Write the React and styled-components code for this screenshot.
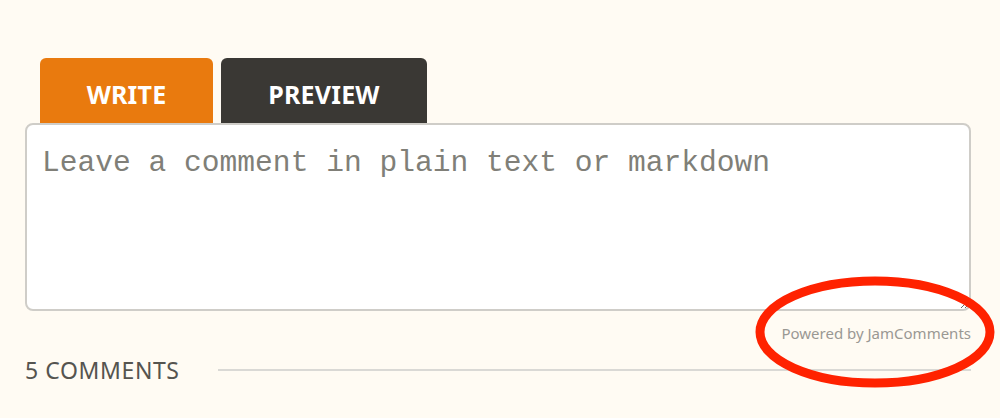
import styled, { createGlobalStyle } from "styled-components";

const GlobalStyle = createGlobalStyle`
  body {
    margin: 0;
    background: #fffbf3;
    font-family: "Noto Sans", "Open Sans", sans-serif;
  }
`;

const Page = styled.div`
  position: relative;
  width: 1000px;
  height: 418px;
  padding: 58px 29px 0 25px;
  box-sizing: border-box;
`;

const Tabs = styled.div`
  display: flex;
  gap: 8px;
  padding-left: 15px;
`;

const Tab = styled.button`
  height: 65px;
  width: ${(p) => p.$width}px;
  padding: 7px 0 0;
  border: none;
  border-radius: 6px 6px 0 0;
  background: ${(p) => (p.$active ? "#e97a0e" : "#3a3834")};
  color: #ffffff;
  font-family: "Noto Sans", sans-serif;
  font-weight: 700;
  font-size: 25px;
  letter-spacing: 0.2px;
  cursor: pointer;
`;

const Editor = styled.textarea`
  display: block;
  width: 100%;
  height: 188px;
  box-sizing: border-box;
  margin: 0;
  padding: 16px 15px;
  border: 2px solid #cfcdc8;
  border-radius: 8px;
  background: #ffffff;
  font-family: "Liberation Mono", monospace;
  font-size: 29.6px;
  line-height: 44px;
  color: #333;
  outline: none;

  &::placeholder {
    color: #807f78;
  }
`;

const Powered = styled.div`
  display: flex;
  justify-content: flex-end;
  margin-top: 12px;
  font-size: 15px;
  color: #9a9893;
`;

const CountRow = styled.div`
  display: flex;
  align-items: center;
  gap: 38px;
  margin-top: 11px;
`;

const Count = styled.h3`
  margin: 0;
  font-weight: 400;
  font-size: 23px;
  color: #55544f;
  letter-spacing: 0.6px;
`;

const Rule = styled.div`
  flex: 1;
  height: 2px;
  background: #dad9d5;
`;

const Highlight = styled.svg`
  position: absolute;
  left: 750px;
  top: 274px;
  pointer-events: none;
`;

const App = () => {
  return (
    <>
      <GlobalStyle />
      <Page>
        <Tabs>
          <Tab $active $width={173}>WRITE</Tab>
          <Tab $width={206}>PREVIEW</Tab>
        </Tabs>
        <Editor placeholder="Leave a comment in plain text or markdown" />
        <Powered>Powered by JamComments</Powered>
        <CountRow>
          <Count>5 COMMENTS</Count>
          <Rule />
        </CountRow>
        <Highlight width="252" height="118" viewBox="0 0 252 118">
          <ellipse cx="125" cy="58" rx="115" ry="51" fill="none" stroke="#ff2200" strokeWidth="9" />
        </Highlight>
      </Page>
    </>
  );
};

export default App;
